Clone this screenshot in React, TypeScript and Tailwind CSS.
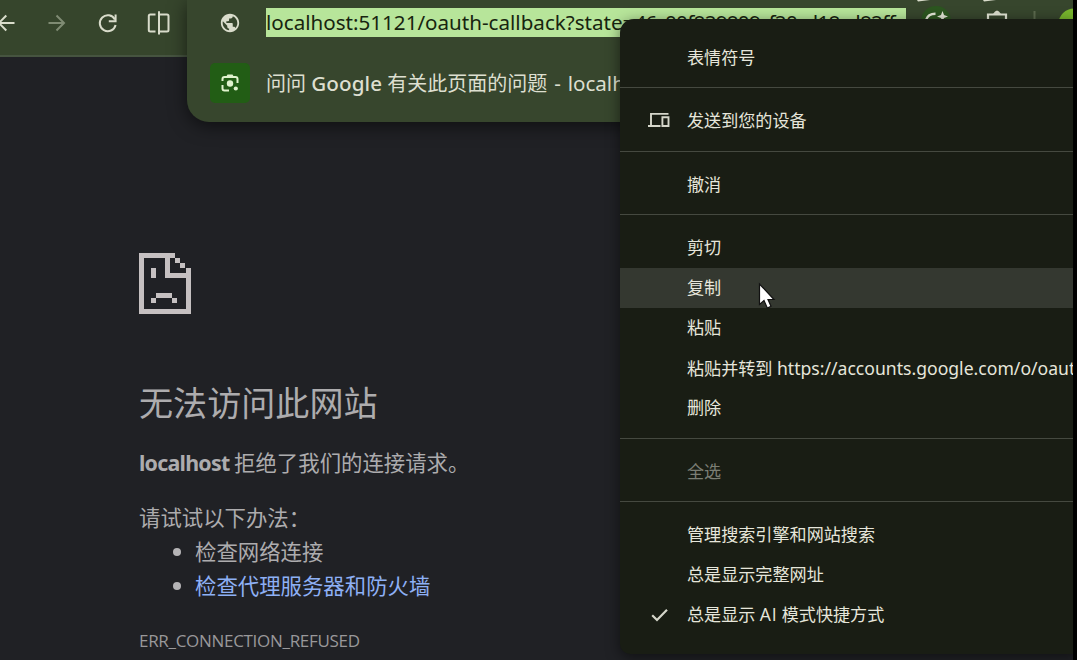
import React from 'react';
import { MdPublic } from 'react-icons/md';

function Divider() {
  return (
    <div className="h-[23.5px] pt-[10px]">
      <div className="h-px bg-[#454940]" />
    </div>
  );
}

interface ItemProps {
  children: React.ReactNode;
  icon?: React.ReactNode;
  active?: boolean;
  disabled?: boolean;
}

function Item({ children, icon, active, disabled }: ItemProps) {
  return (
    <div
      className={`flex h-10 items-center whitespace-nowrap text-[17.1px] ${active ? 'bg-[#343830]' : ''} ${
        disabled ? 'text-[#7b7e74]' : 'text-[#e6e6db]'
      }`}
    >
      <div className="flex w-[67px] shrink-0 items-center pl-[27px]">{icon}</div>
      <div className="pt-px">{children}</div>
    </div>
  );
}

function ContextMenu() {
  return (
    <div className="absolute left-[620px] top-[19px] h-[635px] w-[457px] overflow-hidden rounded-tl-[14px] rounded-bl-[10px] bg-[#191d14] pt-[18px] shadow-[0_3px_14px_rgba(0,0,0,0.5)]">
      <Item>表情符号</Item>
      <Divider />
      <Item
        icon={
          <svg width="24" height="18" viewBox="0 0 24 18" fill="none" stroke="#d5d6ca" strokeWidth="1.9">
            <path d="M21.5 1.9H4V13.6M1 14H13.5M15.4 5.3H21.5V14H15.4Z" />
          </svg>
        }
      >
        发送到您的设备
      </Item>
      <Divider />
      <Item>撤消</Item>
      <Divider />
      <Item>剪切</Item>
      <Item active>复制</Item>
      <Item>粘贴</Item>
      <Item>
        粘贴并转到 <span className="text-[17.6px]">https://accounts.google.com/o/oaut</span>
      </Item>
      <Item>删除</Item>
      <Divider />
      <Item disabled>全选</Item>
      <Divider />
      <Item>管理搜索引擎和网站搜索</Item>
      <Item>总是显示完整网址</Item>
      <Item
        icon={
          <svg width="24" height="18" viewBox="0 0 24 18" fill="none" stroke="#d5d6ca" strokeWidth="2.2">
            <path d="M5.2 9.2L10 14L20 3.8" />
          </svg>
        }
      >
        总是显示 <span className="font-['Open_Sans',sans-serif] text-[17.6px] leading-none tracking-[0.7px]">AI</span> 模式快捷方式
      </Item>
    </div>
  );
}

function Toolbar() {
  return (
    <div className="flex h-[57px] border-b-2 border-[#465440] bg-[#36452c]">
      <svg width="187" height="46" viewBox="0 0 187 46" fill="none" stroke="#d9dccb" strokeWidth="2">
        <path d="M14.5 23H-1M6.3 15.5L-1.2 23L6.3 30.5" />
        <path d="M48.5 23H64M56.5 15.5L64 23L56.5 30.5" stroke="#7f8b73" />
        <path d="M114.9 19.5A8 8 0 1 0 115.6 25" />
        <path d="M115.6 14.5V21.3H108.8" />
        <path d="M155.5 14.5H150.3Q148.8 14.5 148.8 16V30Q148.8 31.5 150.3 31.5H155.5M159 11.2V34.5M159 14.5H167Q168.5 14.5 168.5 16V30Q168.5 31.5 167 31.5H159" />
      </svg>
    </div>
  );
}

function Omnibox() {
  return (
    <div className="absolute left-[187px] top-0 h-[122px] w-[890px] rounded-bl-[22px] bg-[#37462d] shadow-[0_4px_18px_rgba(0,0,0,0.55)]">
      <div className="flex h-[46px] items-start pt-2">
        <MdPublic className="ml-8 mt-[4px] h-[22px] w-[22px] shrink-0 text-[#d9dccb]" />
        <div className="ml-[25px] h-[29px] w-[640px] shrink-0 overflow-hidden whitespace-nowrap bg-[#b7e59a] text-[20.6px] leading-[28px] text-[#17240f]">
          localhost:51121/oauth-callback?state=<span className="tracking-[-0.7px]">46_00f829809_f20_d18_d82ff</span>
        </div>
        <svg className="-mt-2 shrink-0" width="171" height="30" viewBox="906 0 171 30" fill="none" stroke="#e3e6d6">
          <path d="M917 0H930L918 1.5Z" fill="#d9dccb" stroke="none" />
          <path d="M983 0H996L984 1.5Z" fill="#d9dccb" stroke="none" />
          <circle cx="936" cy="21" r="15" fill="#2c5620" stroke="none" />
          <path d="M926 20Q928 13.8 935.5 13.8" strokeWidth="2.4" />
          <path d="M942.5 11L944 15L948 16.5L944 18L942.5 22L941 18L937 16.5L941 15Z" fill="#e3e6d6" stroke="none" />
          <path d="M988 24V14.5H1006V24" strokeWidth="2.2" />
          <path d="M993 14Q997 7 1001 14Z" fill="#d9dccb" stroke="none" />
          <path d="M1034.5 11V30" stroke="#5c6a4f" strokeWidth="2" />
          <circle cx="1074" cy="24" r="15.5" fill="#78b62d" stroke="none" />
        </svg>
      </div>
      <div className="flex h-[74px] items-center pl-[23px]">
        <div className="flex h-10 w-10 items-center justify-center rounded-[5px] bg-[#225d15]">
          <svg width="20" height="20" viewBox="0 0 20 20" fill="none" stroke="#e0f3ce" strokeWidth="2">
            <path d="M2.5 8V6Q2.5 4 4.5 4H15.5Q17.5 4 17.5 6V10M2.5 12V15.5Q2.5 17.5 4.5 17.5H9" />
            <path d="M6 4L7.5 1.5H12.5L14 4Z" fill="#e0f3ce" stroke="none" />
            <circle cx="10" cy="10.5" r="3.2" fill="#e0f3ce" stroke="none" />
            <circle cx="15.8" cy="15.5" r="2.1" fill="#e0f3ce" stroke="none" />
          </svg>
        </div>
        <div className="ml-[16px] whitespace-nowrap text-[20px] text-[#dddfd0]">
          问问 <span className="text-[20.6px] font-medium tracking-[0.1px]">Google</span> 有关此页面的问题
          <span className="text-[20.6px] [word-spacing:1.5px]"> - localhost</span>
        </div>
      </div>
    </div>
  );
}

export default function App() {
  return (
    <div className="relative h-[660px] w-[1077px] overflow-hidden bg-[#202125] font-['Noto_Sans','Noto_Sans_CJK_SC',sans-serif]">
      <Toolbar />

      {/* Error page */}
      <main className="pl-[139px] pt-[195px] text-[#adacae]">
        <svg width="52" height="63" viewBox="0 0 52 63" fill="#c5c0c1" shapeRendering="crispEdges">
          <path d="M0 1H36V6H31V21H47V16H52V62H0ZM5 6V57H47V26H26V6Z" fillRule="evenodd" />
          <path d="M36 6H41V11H36ZM41 11H46V16H41ZM12 16H17V26H12ZM17 41H33V46H17ZM12 46H17V51H12ZM33 46H38V51H33Z" />
        </svg>
        <h1 className="mt-[63px] text-[34.1px] font-normal leading-[50px]">无法访问此网站</h1>
        <p className="mt-[18px] text-[21.4px] leading-[34px]">
          <strong className="tracking-[-0.75px]">localhost</strong>
          <span className="-ml-px"> 拒绝了我们的连接请求。</span>
        </p>
        <p className="mt-[21px] text-[21.4px] leading-[34px]">请试试以下办法：</p>
        <ul className="text-[21.4px] leading-[34px]">
          <li className="flex items-center pl-[34px]">
            <span className="mr-[14px] h-[8px] w-[8px] rounded-full bg-[#b5b4b6]" />
            检查网络连接
          </li>
          <li className="flex items-center pl-[34px] text-[#8eb0f5]">
            <span className="mr-[14px] h-[8px] w-[8px] rounded-full bg-[#b5b4b6]" />
            检查代理服务器和防火墙
          </li>
        </ul>
        <div className="mt-[26px] font-['Open_Sans',sans-serif] text-[17px] leading-6 tracking-[-0.3px] text-[#99989a]">
          ERR_CONNECTION_REFUSED
        </div>
      </main>

      <Omnibox />
      <ContextMenu />
      <div className="absolute right-0 top-0 h-full w-1 bg-black" />

      {/* Pointer */}
      <svg className="absolute left-[757px] top-[282px]" width="20" height="28" viewBox="0 0 20 28">
        <path d="M2.5 2V22.5L7 18.5L10.3 26L14 24.3L11 17.5H17Z" fill="#fff" stroke="#111" strokeWidth="1.2" />
      </svg>
    </div>
  );
}
